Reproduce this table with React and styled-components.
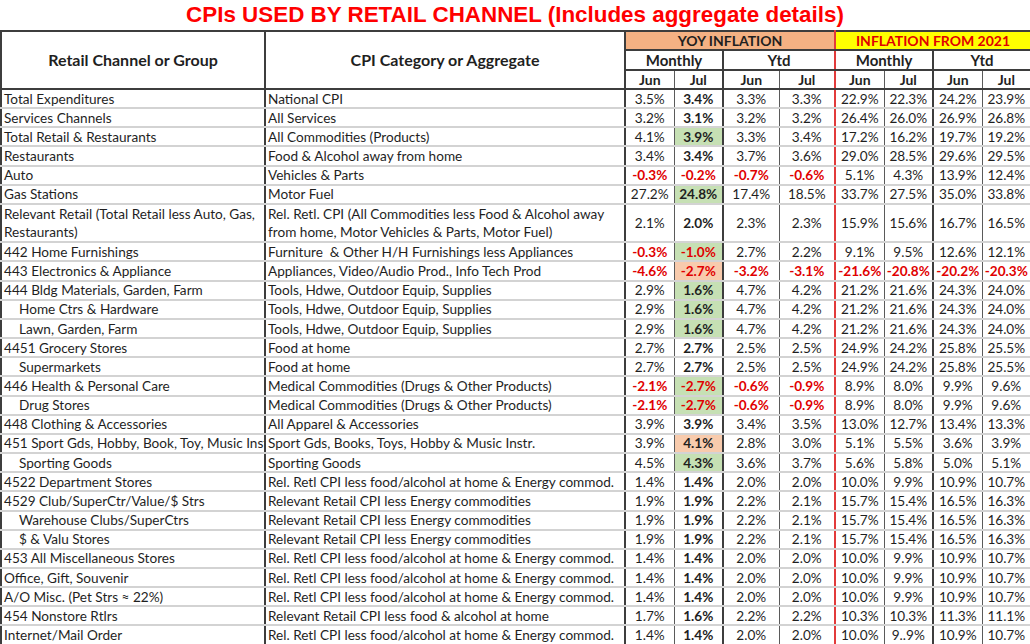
import React from 'react';
import styled, { createGlobalStyle } from 'styled-components';

const Global = createGlobalStyle`
  html, body { margin: 0; padding: 0; background: #fff; }
  body { font-family: Lato, "Open Sans", sans-serif; color: #1f1f1f; }
`;

const EDGE = {
  major: '2px solid #3d3d3d',
  minor: '1px solid #5a5a5a',
  red: '2px solid #e23b3b',
};
const DATA_EDGES = ['major', 'major', 'major', 'minor', 'major', 'minor', 'red', 'minor', 'major', 'minor'];
const WIDTHS = [264, 360, 49, 49, 56, 56, 49, 49, 49, 49];

const TONES = { g: '#c6e0b4', o: '#f8cbad' };

const Page = styled.div`
  width: 1030px;
  height: 644px;
  overflow: hidden;
  display: flex;
  flex-direction: column;
`;

const Title = styled.h1`
  margin: 0;
  height: 30px;
  line-height: 30px;
  text-align: center;
  font-family: "Liberation Sans", Arial, sans-serif;
  font-weight: 700;
  font-size: 22.4px;
  color: #ff0000;
  white-space: nowrap;
`;

const Sheet = styled.table`
  width: 1030px;
  table-layout: fixed;
  border-collapse: collapse;
  font-family: Lato, "Open Sans", sans-serif;
  font-size: 13.6px;
  color: #1f1f1f;
  border-top: 2px solid #3d3d3d;
  border-bottom: 2px solid #3d3d3d;
`;

const HeadRow = styled.tr`
  height: ${(p) => p.$h}px;
`;

const HeadCell = styled.th`
  padding: 0;
  line-height: 16px;
  text-align: center;
  vertical-align: middle;
  font-weight: 700;
  font-size: ${(p) => p.$size || 14}px;
  color: ${(p) => (p.$red ? '#e00000' : '#1f1f1f')};
  background: ${(p) => p.$bg || '#fff'};
  border-left: ${(p) => EDGE[p.$edge || 'major']};
  border-right: ${(p) => (p.$last ? EDGE.major : 'none')};
  border-bottom: 2px solid #3d3d3d;
  white-space: nowrap;
  overflow: hidden;
`;

const Row = styled.tr`
  height: ${(p) => (p.$double ? 38.4 : 19.17)}px;
`;

const TextCell = styled.td`
  padding: 0 2px 0 ${(p) => (p.$indent ? 17 : 2)}px;
  text-align: left;
  vertical-align: ${(p) => (p.$wrap ? 'top' : 'middle')};
  line-height: ${(p) => (p.$wrap ? 18 : 16)}px;
  white-space: ${(p) => (p.$wrap ? 'normal' : 'nowrap')};
  overflow: hidden;
  border-left: ${EDGE.major};
  border-bottom: 2px solid #d3d3d3;
`;

const NumCell = styled.td`
  padding: 0;
  text-align: center;
  vertical-align: middle;
  line-height: 16px;
  white-space: nowrap;
  overflow: hidden;
  font-weight: ${(p) => (p.$bold ? 700 : 400)};
  color: ${(p) => (p.$neg ? '#e00000' : '#1f1f1f')};
  background: ${(p) => (p.$tone ? TONES[p.$tone] : 'transparent')};
  border-left: ${(p) => EDGE[p.$edge]};
  border-right: ${(p) => (p.$last ? EDGE.major : 'none')};
  border-bottom: 2px solid #d3d3d3;
`;

const TOOLS = 'Tools, Hdwe, Outdoor Equip, Supplies';
const MED = 'Medical Commodities (Drugs & Other Products)';
const RRE = 'Rel. Retl CPI less food/alcohol at home & Energy commod.';
const RRLE = 'Relevant Retail CPI less Energy commodities';

const v = (s) => s.split(' ');

const ROWS = [
  { l: 'Total Expenditures', c: 'National CPI', d: v('3.5% 3.4% 3.3% 3.3% 22.9% 22.3% 24.2% 23.9%') },
  { l: 'Services Channels', c: 'All Services', d: v('3.2% 3.1% 3.2% 3.2% 26.4% 26.0% 26.9% 26.8%') },
  { l: 'Total Retail & Restaurants', c: 'All Commodities (Products)', d: v('4.1% 3.9% 3.3% 3.4% 17.2% 16.2% 19.7% 19.2%'), t: 'g' },
  { l: 'Restaurants', c: 'Food & Alcohol away from home', d: v('3.4% 3.4% 3.7% 3.6% 29.0% 28.5% 29.6% 29.5%') },
  { l: 'Auto', c: 'Vehicles & Parts', d: v('-0.3% -0.2% -0.7% -0.6% 5.1% 4.3% 13.9% 12.4%') },
  { l: 'Gas Stations', c: 'Motor Fuel', d: v('27.2% 24.8% 17.4% 18.5% 33.7% 27.5% 35.0% 33.8%'), t: 'g' },
  {
    l: 'Relevant Retail (Total Retail less Auto, Gas, Restaurants)',
    c: 'Rel. Retl. CPI (All Commodities less Food & Alcohol away from home, Motor Vehicles & Parts, Motor Fuel)',
    d: v('2.1% 2.0% 2.3% 2.3% 15.9% 15.6% 16.7% 16.5%'),
    double: true,
  },
  { l: '442 Home Furnishings', c: 'Furniture \u00a0& Other H/H Furnishings less Appliances', d: v('-0.3% -1.0% 2.7% 2.2% 9.1% 9.5% 12.6% 12.1%'), t: 'g' },
  { l: '443 Electronics & Appliance', c: 'Appliances, Video/Audio Prod., Info Tech Prod', d: v('-4.6% -2.7% -3.2% -3.1% -21.6% -20.8% -20.2% -20.3%'), t: 'o' },
  { l: '444 Bldg Materials, Garden, Farm', c: TOOLS, d: v('2.9% 1.6% 4.7% 4.2% 21.2% 21.6% 24.3% 24.0%'), t: 'g' },
  { l: 'Home Ctrs & Hardware', i: true, c: TOOLS, d: v('2.9% 1.6% 4.7% 4.2% 21.2% 21.6% 24.3% 24.0%'), t: 'g' },
  { l: 'Lawn, Garden, Farm', i: true, c: TOOLS, d: v('2.9% 1.6% 4.7% 4.2% 21.2% 21.6% 24.3% 24.0%'), t: 'g' },
  { l: '4451 Grocery Stores', c: 'Food at home', d: v('2.7% 2.7% 2.5% 2.5% 24.9% 24.2% 25.8% 25.5%') },
  { l: 'Supermarkets', i: true, c: 'Food at home', d: v('2.7% 2.7% 2.5% 2.5% 24.9% 24.2% 25.8% 25.5%') },
  { l: '446 Health & Personal Care', c: MED, d: v('-2.1% -2.7% -0.6% -0.9% 8.9% 8.0% 9.9% 9.6%'), t: 'g' },
  { l: 'Drug Stores', i: true, c: MED, d: v('-2.1% -2.7% -0.6% -0.9% 8.9% 8.0% 9.9% 9.6%'), t: 'g' },
  { l: '448 Clothing & Accessories', c: 'All Apparel & Accessories', d: v('3.9% 3.9% 3.4% 3.5% 13.0% 12.7% 13.4% 13.3%') },
  { l: '451 Sport Gds, Hobby, Book, Toy, Music Instr', c: 'Sport Gds, Books, Toys, Hobby & Music Instr.', d: v('3.9% 4.1% 2.8% 3.0% 5.1% 5.5% 3.6% 3.9%'), t: 'o' },
  { l: 'Sporting Goods', i: true, c: 'Sporting Goods', d: v('4.5% 4.3% 3.6% 3.7% 5.6% 5.8% 5.0% 5.1%'), t: 'g' },
  { l: '4522 Department Stores', c: RRE, d: v('1.4% 1.4% 2.0% 2.0% 10.0% 9.9% 10.9% 10.7%') },
  { l: '4529 Club/SuperCtr/Value/$ Strs', c: RRLE, d: v('1.9% 1.9% 2.2% 2.1% 15.7% 15.4% 16.5% 16.3%') },
  { l: 'Warehouse Clubs/SuperCtrs', i: true, c: RRLE, d: v('1.9% 1.9% 2.2% 2.1% 15.7% 15.4% 16.5% 16.3%') },
  { l: '$ & Valu Stores', i: true, c: RRLE, d: v('1.9% 1.9% 2.2% 2.1% 15.7% 15.4% 16.5% 16.3%') },
  { l: '453 All Miscellaneous Stores', c: RRE, d: v('1.4% 1.4% 2.0% 2.0% 10.0% 9.9% 10.9% 10.7%') },
  { l: 'Office, Gift, Souvenir', c: RRE, d: v('1.4% 1.4% 2.0% 2.0% 10.0% 9.9% 10.9% 10.7%') },
  { l: 'A/O Misc. (Pet Strs \u2248 22%)', c: RRE, d: v('1.4% 1.4% 2.0% 2.0% 10.0% 9.9% 10.9% 10.7%') },
  { l: '454 Nonstore Rtlrs', c: 'Relevant Retail CPI less food & alcohol at home', d: v('1.7% 1.6% 2.2% 2.2% 10.3% 10.3% 11.3% 11.1%') },
  { l: 'Internet/Mail Order', c: RRE, d: v('1.4% 1.4% 2.0% 2.0% 10.0% 9..9% 10.9% 10.7%') },
];

const MONTHS = ['Jun', 'Jul', 'Jun', 'Jul', 'Jun', 'Jul', 'Jun', 'Jul'];

export default function App() {
  return (
    <Page>
      <Global />
      <Title>CPIs USED BY RETAIL CHANNEL (Includes aggregate details)</Title>
      <Sheet>
        <colgroup>
          {WIDTHS.map((w, i) => (
            <col key={i} style={{ width: w }} />
          ))}
        </colgroup>
        <thead>
          <HeadRow $h={19}>
            <HeadCell rowSpan={3} $size={16}>Retail Channel or Group</HeadCell>
            <HeadCell rowSpan={3} $size={16}>CPI Category or Aggregate</HeadCell>
            <HeadCell colSpan={4} $bg="#f4b183">YOY INFLATION</HeadCell>
            <HeadCell colSpan={4} $bg="#ffff00" $red $edge="red" $last>INFLATION FROM 2021</HeadCell>
          </HeadRow>
          <HeadRow $h={20}>
            <HeadCell colSpan={2} $size={15}>Monthly</HeadCell>
            <HeadCell colSpan={2} $size={15}>Ytd</HeadCell>
            <HeadCell colSpan={2} $size={15} $edge="red">Monthly</HeadCell>
            <HeadCell colSpan={2} $size={15} $last>Ytd</HeadCell>
          </HeadRow>
          <HeadRow $h={19}>
            {MONTHS.map((m, i) => (
              <HeadCell key={i} $size={14} $edge={DATA_EDGES[i + 2]} $last={i === 7}>
                {m}
              </HeadCell>
            ))}
          </HeadRow>
        </thead>
        <tbody>
          {ROWS.map((r, ri) => (
            <Row key={ri} $double={r.double}>
              <TextCell $indent={r.i} $wrap={r.double}>{r.l}</TextCell>
              <TextCell $wrap={r.double}>{r.c}</TextCell>
              {r.d.map((val, ci) => {
                const neg = val.startsWith('-');
                return (
                  <NumCell
                    key={ci}
                    $edge={DATA_EDGES[ci + 2]}
                    $last={ci === 7}
                    $neg={neg}
                    $bold={neg || ci === 1}
                    $tone={ci === 1 ? r.t : undefined}
                  >
                    {val}
                  </NumCell>
                );
              })}
            </Row>
          ))}
        </tbody>
      </Sheet>
    </Page>
  );
}
